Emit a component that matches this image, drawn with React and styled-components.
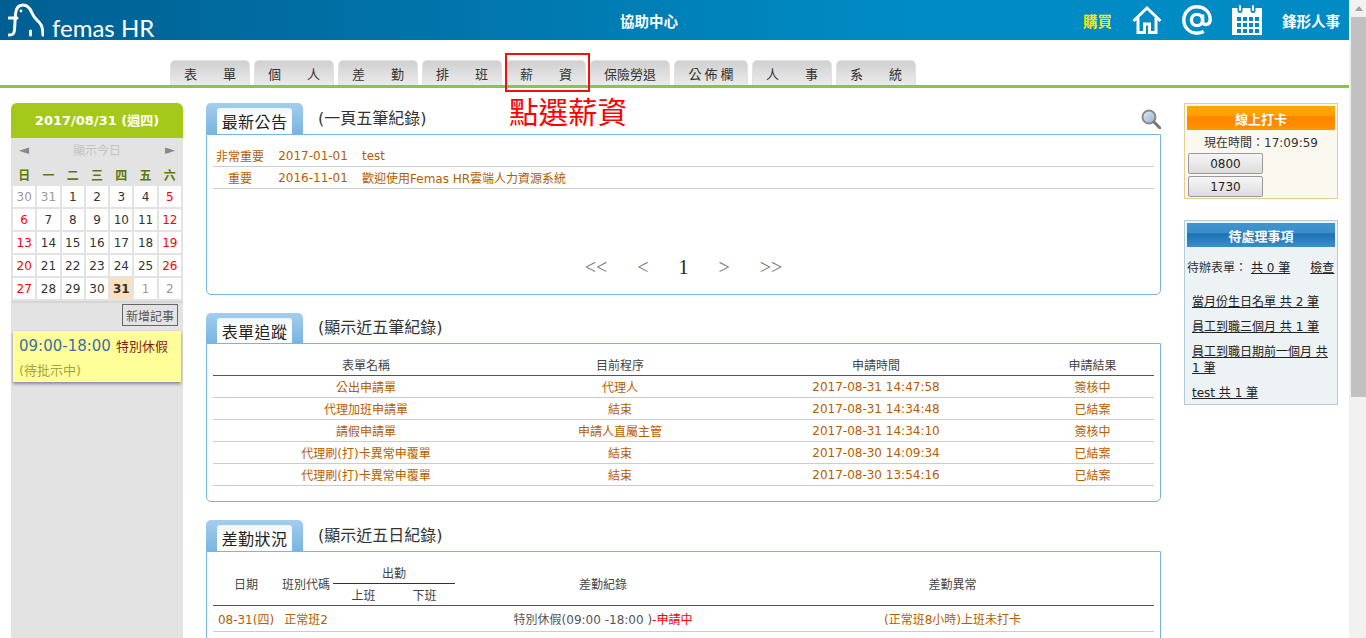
import React from 'react';
import styled, { createGlobalStyle } from 'styled-components';

const GlobalStyle = createGlobalStyle`
    html, body {
        margin: 0;
        height: 100%;
        overflow: hidden;
        background: #fff;
        font-family: "DejaVu Sans", "Noto Sans CJK TC", sans-serif;
        font-size: 12px;
        color: #444;
    }
`;

const Shell = styled.div`
    display: flex;
    height: 100vh;
    overflow: hidden;
`;

const Page = styled.div`
    flex: 1;
    min-width: 0;
    display: flex;
    flex-direction: column;
`;

const Scrollbar = styled.div`
    width: 17px;
    flex-shrink: 0;
    background: #f1f1f1;
    display: flex;
    flex-direction: column;
    align-items: flex-end;
`;

const ScrollArrow = styled.div`
    width: 15px;
    height: 17px;
    display: flex;
    align-items: center;
    justify-content: center;
    &::before {
        content: '';
        border-left: 4px solid transparent;
        border-right: 4px solid transparent;
        border-bottom: 5px solid #a3a3a3;
    }
`;

const ScrollThumb = styled.div`
    width: 15px;
    height: 380px;
    background: #c1c1c1;
`;

const Header = styled.header`
    height: 40px;
    flex-shrink: 0;
    display: flex;
    align-items: center;
    padding: 0 9px 0 8px;
    background: linear-gradient(90deg, #005f92 0%, #0079b0 40%, #008ac3 65%, #008bc4 100%);
    color: #fff;
`;

const Logo = styled.div`
    width: 612px;
    height: 40px;
    display: flex;
    align-items: flex-end;
    gap: 8px;
`;

const LogoMark = styled.svg`
    width: 36px;
    height: 34px;
    margin-bottom: 3px;
    flex-shrink: 0;
`;

const LogoText = styled.span`
    font-family: Lato, "Open Sans", sans-serif;
    font-weight: 400;
    font-size: 24px;
    line-height: 24px;
    white-space: nowrap;
`;

const HeaderLink = styled.span`
    font-family: "Noto Sans CJK TC", sans-serif;
    font-size: 14.5px;
    font-weight: 700;
    color: ${(p) => p.$color || '#fff'};
`;

const HeaderRight = styled.div`
    margin-left: auto;
    display: flex;
    align-items: center;
    gap: 20px;
`;

const HeaderIcon = styled.svg`
    width: 30px;
    height: 30px;
    display: block;
`;

const Nav = styled.nav`
    position: relative;
    height: 45px;
    flex-shrink: 0;
    display: flex;
    align-items: flex-end;
    gap: 4px;
    padding-left: 170px;
    border-bottom: 3px solid #8cc444;
`;

const Tab = styled.div`
    width: ${(p) => (p.$narrow ? 74 : 80)}px;
    height: 25px;
    box-sizing: border-box;
    display: flex;
    align-items: center;
    justify-content: center;
    font-family: "Noto Sans CJK TC", sans-serif;
    font-size: 13px;
    color: #333;
    white-space: pre;
    background: linear-gradient(#d0d0d0, #ebebeb);
    border: 1px solid #e2e2e2;
    border-bottom: 0;
    border-radius: 5px 5px 0 0;
`;

const CalloutBox = styled.div`
    position: absolute;
    left: 505px;
    top: 13px;
    width: 85px;
    height: 39px;
    box-sizing: border-box;
    border: 2px solid #f01010;
`;

const CalloutText = styled.div`
    position: absolute;
    left: 509px;
    top: 50px;
    font-family: "Noto Sans CJK TC", serif;
    font-size: 29.5px;
    line-height: 40px;
    font-weight: 400;
    color: #f00;
    white-space: nowrap;
    z-index: 1;
`;

const Content = styled.div`
    flex: 1;
    min-height: 0;
    overflow: hidden;
    display: flex;
    gap: 23px;
    padding: 15px 11px 0;
`;

const LeftColumn = styled.aside`
    width: 172px;
    flex-shrink: 0;
    background: #e3e3e3;
    border-radius: 6px 6px 0 0;
`;

const DateBar = styled.div`
    height: 35px;
    padding-bottom: 2px;
    box-sizing: border-box;
    display: flex;
    align-items: center;
    justify-content: center;
    background: #a5c91a;
    border-radius: 6px 6px 0 0;
    color: #fff;
    font-weight: 700;
    font-size: 13px;
`;

const TodayRow = styled.div`
    height: 22px;
    display: flex;
    align-items: center;
    justify-content: space-between;
    padding: 0 8px;
    color: #c4c4c4;
    margin-bottom: 2px;
`;

const TodayArrow = styled.span`
    color: #888;
    font-size: 13px;
`;

const Calendar = styled.table`
    border-collapse: separate;
    border-spacing: 2px;
    table-layout: fixed;
    width: 172px;
    border-bottom: 2px solid #d6d6d6;
    padding-bottom: 0;
`;

const WeekHead = styled.th`
    height: 20px;
    padding: 0;
    color: #5e7a05;
    font-size: 12px;
    font-weight: 700;
`;

const DayCell = styled.td`
    height: 21px;
    padding: 0;
    text-align: center;
    background: ${(p) => (p.$today ? '#fde0bd' : '#fff')};
    color: ${(p) => (p.$muted ? '#999' : p.$holiday ? '#f00' : '#333')};
    font-weight: ${(p) => (p.$today ? 700 : 400)};
`;

const NoteAction = styled.div`
    display: flex;
    justify-content: flex-end;
    padding: 1px 5px 5px 0;
`;

const NoteButton = styled.div`
    width: 56px;
    height: 22px;
    box-sizing: border-box;
    display: flex;
    align-items: center;
    justify-content: center;
    border: 1px solid #666;
    color: #555;
    font-size: 12px;
`;

const Note = styled.div`
    margin: 0 2px;
    height: 51px;
    box-sizing: border-box;
    padding: 5px 6px 0;
    background: #ffff99;
    box-shadow: 0 2px 3px rgba(80, 70, 110, 0.6);
`;

const NoteTime = styled.span`
    font-size: 15px;
    color: #39709f;
`;

const NoteType = styled.span`
    margin-left: 5px;
    font-size: 13px;
    color: #8b1a1a;
`;

const NoteStatus = styled.div`
    margin-top: 5px;
    font-size: 13px;
    color: #a3a33a;
`;

const Main = styled.main`
    width: 955px;
    flex-shrink: 0;
    display: flex;
    flex-direction: column;
    gap: 18px;
`;

const Panel = styled.section`
    flex-shrink: 0;
`;

const PanelHead = styled.div`
    height: ${(p) => p.$height || 31}px;
    display: flex;
    align-items: flex-end;
`;

const PanelTab = styled.div`
    width: 97px;
    height: 100%;
    box-sizing: border-box;
    padding: 5px 11px 0;
    background: linear-gradient(#a4cdec, #78b5e2);
    border-radius: 5px 5px 0 0;
`;

const PanelTabLabel = styled.div`
    height: 100%;
    display: flex;
    align-items: center;
    justify-content: center;
    background: linear-gradient(#eef5fb, #fff 40%);
    border-radius: 3px 3px 0 0;
    font-family: "Noto Sans CJK TC", sans-serif;
    font-size: 16px;
    letter-spacing: 0.4px;
    color: #222;
    white-space: nowrap;
`;

const PanelCaption = styled.div`
    margin: 0 0 4px 15px;
    align-self: center;
    font-size: 16px;
    color: #333;
    white-space: nowrap;
`;

const SearchIcon = styled.svg`
    width: 20px;
    height: 20px;
    margin-left: auto;
    align-self: flex-start;
    margin-top: 6px;
`;

const PanelBody = styled.div`
    height: ${(p) => p.$height}px;
    box-sizing: border-box;
    display: flex;
    flex-direction: column;
    padding: 10px 6px 0;
    border: 1px solid #78b5e2;
    border-radius: 0 0 5px 5px;
    background: #fff;
`;

const DataTable = styled.table`
    width: 100%;
    table-layout: fixed;
    border-collapse: collapse;
`;

const Col = styled.col`
    width: ${(p) => p.$width}px;
`;

const HeadCell = styled.th`
    height: 21px;
    padding: 0;
    font-weight: 400;
    color: #444;
    text-align: center;
    border-bottom: 1px solid ${(p) => (p.$nested ? '#333' : '#555')};
`;

const BodyCell = styled.td`
    height: ${(p) => p.$height || 21}px;
    padding: 0;
    padding-right: ${(p) => p.$inset || 0}px;
    text-align: ${(p) => p.$align || 'center'};
    color: ${(p) => p.$color || '#b85c00'};
    border-bottom: 1px solid #ccc;
    white-space: nowrap;
`;

const Alert = styled.span`
    color: #f00;
`;

const Pager = styled.div`
    margin-top: auto;
    height: 38px;
    display: flex;
    justify-content: center;
    align-items: flex-start;
    gap: 30px;
    font-family: "Liberation Serif", serif;
    font-size: 20px;
    color: #777;
`;

const PagerCurrent = styled.span`
    color: #222;
`;

const RightColumn = styled.aside`
    width: 154px;
    flex-shrink: 0;
    margin-left: 0;
    display: flex;
    flex-direction: column;
    gap: 21px;
`;

const SideBox = styled.div`
    box-sizing: border-box;
    height: ${(p) => p.$height}px;
    padding: 2px;
    background: ${(p) => p.$bg};
    border: 1px solid ${(p) => p.$line};
`;

const SideTitle = styled.div`
    height: 24px;
    display: flex;
    align-items: center;
    justify-content: center;
    color: #fff;
    font-family: "Noto Sans CJK TC", sans-serif;
    font-weight: 700;
    font-size: 13px;
    background: ${(p) => p.$gradient};
`;

const ClockLine = styled.div`
    height: 22px;
    padding-bottom: 1px;
    display: flex;
    align-items: center;
    justify-content: center;
    color: #333;
`;

const PunchButton = styled.div`
    width: 75px;
    height: 21px;
    box-sizing: border-box;
    margin: 0 0 2px 1px;
    display: flex;
    align-items: center;
    justify-content: center;
    color: #222;
    background: linear-gradient(#f6f6f6, #dcdcdc);
    border: 1px solid #999;
    border-radius: 2px;
`;

const PendingRow = styled.div`
    display: flex;
    justify-content: space-between;
    margin: 13px 2px 18px 0;
    line-height: 16px;
    color: #333;
    white-space: nowrap;
`;

const PendingLink = styled.span`
    text-decoration: underline;
    color: #222;
`;

const PendingCount = styled(PendingLink)`
    margin-left: 4px;
    margin-right: 20px;
`;

const TodoLink = styled.div`
    margin: 0 3px 9px 5px;
    line-height: 16px;
    text-decoration: underline;
    color: #222;
`;

const weekDays = ['日', '一', '二', '三', '四', '五', '六'];

const weeks = [
    [[30, 'm'], [31, 'm'], 1, 2, 3, 4, 5],
    [6, 7, 8, 9, 10, 11, 12],
    [13, 14, 15, 16, 17, 18, 19],
    [20, 21, 22, 23, 24, 25, 26],
    [27, 28, 29, 30, [31, 't'], [1, 'm'], [2, 'm']],
];

const tabs = [
    { label: '表　　單' },
    { label: '個　　人' },
    { label: '差　　勤' },
    { label: '排　　班' },
    { label: '薪　　資' },
    { label: '保險勞退' },
    { label: '公 佈 欄', narrow: true },
    { label: '人　　事' },
    { label: '系　　統' },
];

const tracking = [
    ['公出申請單', '代理人', '2017-08-31 14:47:58', '簽核中'],
    ['代理加班申請單', '結束', '2017-08-31 14:34:48', '已結案'],
    ['請假申請單', '申請人直屬主管', '2017-08-31 14:34:10', '簽核中'],
    ['代理刷(打)卡異常申覆單', '結束', '2017-08-30 14:09:34', '已結案'],
    ['代理刷(打)卡異常申覆單', '結束', '2017-08-30 13:54:16', '已結案'],
];

function HomeIcon() {
    return (
        <HeaderIcon viewBox="0 0 30 30" fill="none" stroke="#fff" strokeWidth="3">
            <path d="M1.5 16 L15 3 L28.5 16" />
            <path d="M6 13 V27.5 H12.5 V19 H17.5 V27.5 H24 V13" />
        </HeaderIcon>
    );
}

function AtIcon() {
    return (
        <HeaderIcon viewBox="0 0 30 30" fill="none" stroke="#fff" strokeWidth="3.4">
            <circle cx="15" cy="15" r="5.6" />
            <path d="M20.6 9.5 V16.5 C20.6 21 28.2 20.5 28.2 14.5 C28.2 6.5 22 1.8 15 1.8 C7.5 1.8 1.8 7.8 1.8 15 C1.8 22.5 7.5 28.2 15 28.2 C17.5 28.2 19.8 27.7 21.8 26.6" />
        </HeaderIcon>
    );
}

function CalendarIcon() {
    const cells = [];
    [12, 18, 24].forEach((y) => {
        [5, 11, 17, 23].forEach((x) => {
            cells.push(<rect key={`${x}-${y}`} x={x} y={y} width="4" height="4" fill="#0089c2" />);
        });
    });
    return (
        <HeaderIcon viewBox="0 0 30 30">
            <rect x="0" y="3" width="30" height="27" fill="#fff" />
            <rect x="5.5" y="0" width="5" height="8" rx="2.5" fill="#0089c2" />
            <rect x="18.5" y="0" width="5" height="8" rx="2.5" fill="#0089c2" />
            <rect x="7" y="0" width="2" height="6" rx="1" fill="#fff" />
            <rect x="20" y="0" width="2" height="6" rx="1" fill="#fff" />
            {cells}
        </HeaderIcon>
    );
}

function App() {
    return (
        <Shell>
            <GlobalStyle />
            <Page>
                <Header>
                    <Logo>
                        <LogoMark viewBox="0 0 36 34" fill="none" stroke="#fff" strokeWidth="3" strokeLinecap="round">
                            <path d="M1 32 C5 32 6 31 6.5 27 L7.5 11 C8 5 11 2 15 2 C20 2 22 5 24 10 C26 15 29 17 31 19 C34 22 35 26 35 32" />
                            <path d="M1 15 H9" />
                            <path d="M22.5 28 V32" />
                            <circle cx="13" cy="8" r="0.6" strokeWidth="1.6" />
                        </LogoMark>
                        <LogoText>femas HR</LogoText>
                    </Logo>
                    <HeaderLink>協助中心</HeaderLink>
                    <HeaderRight>
                        <HeaderLink $color="#ffe600">購買</HeaderLink>
                        <HomeIcon />
                        <AtIcon />
                        <CalendarIcon />
                        <HeaderLink>鋒形人事</HeaderLink>
                    </HeaderRight>
                </Header>

                <Nav>
                    {tabs.map((tab) => (
                        <Tab key={tab.label} $narrow={tab.narrow}>{tab.label}</Tab>
                    ))}
                    <CalloutBox />
                    <CalloutText>點選薪資</CalloutText>
                </Nav>

                <Content>
                    <LeftColumn>
                        <DateBar>2017/08/31 (週四)</DateBar>
                        <TodayRow>
                            <TodayArrow>◄</TodayArrow>
                            顯示今日
                            <TodayArrow>►</TodayArrow>
                        </TodayRow>
                        <Calendar>
                            <thead>
                                <tr>
                                    {weekDays.map((day) => <WeekHead key={day}>{day}</WeekHead>)}
                                </tr>
                            </thead>
                            <tbody>
                                {weeks.map((week, row) => (
                                    <tr key={row}>
                                        {week.map((item, index) => {
                                            const [day, kind] = Array.isArray(item) ? item : [item];
                                            return (
                                                <DayCell
                                                    key={index}
                                                    $muted={kind === 'm'}
                                                    $today={kind === 't'}
                                                    $holiday={index === 0 || index === 6}
                                                >
                                                    {day}
                                                </DayCell>
                                            );
                                        })}
                                    </tr>
                                ))}
                            </tbody>
                        </Calendar>
                        <NoteAction>
                            <NoteButton>新增記事</NoteButton>
                        </NoteAction>
                        <Note>
                            <NoteTime>09:00-18:00</NoteTime>
                            <NoteType>特別休假</NoteType>
                            <NoteStatus>(待批示中)</NoteStatus>
                        </Note>
                    </LeftColumn>

                    <Main>
                        <Panel>
                            <PanelHead>
                                <PanelTab><PanelTabLabel>最新公告</PanelTabLabel></PanelTab>
                                <PanelCaption>(一頁五筆紀錄)</PanelCaption>
                                <SearchIcon viewBox="0 0 20 20">
                                    <defs>
                                        <linearGradient id="lens" x1="0" y1="0" x2="1" y2="1">
                                            <stop offset="0" stopColor="#e6eef8" />
                                            <stop offset="1" stopColor="#8fadd0" />
                                        </linearGradient>
                                    </defs>
                                    <circle cx="8" cy="8" r="6.5" fill="url(#lens)" stroke="#8a8a8a" strokeWidth="2" />
                                    <path d="M13 13 L19 19" stroke="#777" strokeWidth="3" strokeLinecap="round" />
                                </SearchIcon>
                            </PanelHead>
                            <PanelBody $height={161}>
                                <DataTable>
                                    <colgroup>
                                        <Col $width={54} />
                                        <Col $width={95} />
                                        <Col />
                                    </colgroup>
                                    <tbody>
                                        <tr>
                                            <BodyCell>非常重要</BodyCell>
                                            <BodyCell $inset={3}>2017-01-01</BodyCell>
                                            <BodyCell $align="left">test</BodyCell>
                                        </tr>
                                        <tr>
                                            <BodyCell>重要</BodyCell>
                                            <BodyCell $inset={3}>2016-11-01</BodyCell>
                                            <BodyCell $align="left">歡迎使用Femas HR雲端人力資源系統</BodyCell>
                                        </tr>
                                    </tbody>
                                </DataTable>
                                <Pager>
                                    <span>&lt;&lt;</span>
                                    <span>&lt;</span>
                                    <PagerCurrent>1</PagerCurrent>
                                    <span>&gt;</span>
                                    <span>&gt;&gt;</span>
                                </Pager>
                            </PanelBody>
                        </Panel>

                        <Panel>
                            <PanelHead $height={30}>
                                <PanelTab><PanelTabLabel>表單追蹤</PanelTabLabel></PanelTab>
                                <PanelCaption>(顯示近五筆紀錄)</PanelCaption>
                            </PanelHead>
                            <PanelBody $height={159}>
                                <DataTable>
                                    <colgroup>
                                        <Col $width={306} />
                                        <Col $width={202} />
                                        <Col $width={310} />
                                        <Col />
                                    </colgroup>
                                    <thead>
                                        <tr>
                                            <HeadCell>表單名稱</HeadCell>
                                            <HeadCell>目前程序</HeadCell>
                                            <HeadCell>申請時間</HeadCell>
                                            <HeadCell>申請結果</HeadCell>
                                        </tr>
                                    </thead>
                                    <tbody>
                                        {tracking.map((row, index) => (
                                            <tr key={index}>
                                                <BodyCell>{row[0]}</BodyCell>
                                                <BodyCell>{row[1]}</BodyCell>
                                                <BodyCell>{row[2]}</BodyCell>
                                                <BodyCell>{row[3]}</BodyCell>
                                            </tr>
                                        ))}
                                    </tbody>
                                </DataTable>
                            </PanelBody>
                        </Panel>

                        <Panel>
                            <PanelHead>
                                <PanelTab><PanelTabLabel>差勤狀況</PanelTabLabel></PanelTab>
                                <PanelCaption>(顯示近五日紀錄)</PanelCaption>
                            </PanelHead>
                            <PanelBody $height={161}>
                                <DataTable>
                                    <colgroup>
                                        <Col $width={66} />
                                        <Col $width={54} />
                                        <Col $width={61} />
                                        <Col $width={61} />
                                        <Col $width={296} />
                                        <Col />
                                    </colgroup>
                                    <thead>
                                        <tr>
                                            <HeadCell rowSpan={2}>日期</HeadCell>
                                            <HeadCell rowSpan={2}>班別代碼</HeadCell>
                                            <HeadCell colSpan={2} $nested>出勤</HeadCell>
                                            <HeadCell rowSpan={2}>差勤紀錄</HeadCell>
                                            <HeadCell rowSpan={2}>差勤異常</HeadCell>
                                        </tr>
                                        <tr>
                                            <HeadCell>上班</HeadCell>
                                            <HeadCell>下班</HeadCell>
                                        </tr>
                                    </thead>
                                    <tbody>
                                        <tr>
                                            <BodyCell $height={25}>08-31(四)</BodyCell>
                                            <BodyCell $height={25}>正常班2</BodyCell>
                                            <BodyCell $height={25} />
                                            <BodyCell $height={25} />
                                            <BodyCell $height={25} $color="#555">特別休假(09:00 -18:00 )<Alert>-申請中</Alert></BodyCell>
                                            <BodyCell $height={25}>(正常班8小時)上班未打卡</BodyCell>
                                        </tr>
                                    </tbody>
                                </DataTable>
                            </PanelBody>
                        </Panel>
                    </Main>

                    <RightColumn>
                        <SideBox $height={96} $bg="#fbf8f0" $line="#e8cc90">
                            <SideTitle $gradient="linear-gradient(#ffa800 0%, #ffa000 40%, #ff8400 45%, #ff9400 100%)">線上打卡</SideTitle>
                            <ClockLine>現在時間：17:09:59</ClockLine>
                            <PunchButton>0800</PunchButton>
                            <PunchButton>1730</PunchButton>
                        </SideBox>
                        <SideBox $height={185} $bg="#edf2f5" $line="#b0ccd8">
                            <SideTitle $gradient="linear-gradient(#3f95d0 0%, #3a8ecb 40%, #1f72b4 45%, #3a8ecb 100%)">待處理事項</SideTitle>
                            <PendingRow>
                                <span>待辦表單：<PendingCount>共 0 筆</PendingCount></span>
                                <PendingLink>檢查</PendingLink>
                            </PendingRow>
                            <TodoLink>當月份生日名單 共 2 筆</TodoLink>
                            <TodoLink>員工到職三個月 共 1 筆</TodoLink>
                            <TodoLink>員工到職日期前一個月 共 1 筆</TodoLink>
                            <TodoLink>test 共 1 筆</TodoLink>
                        </SideBox>
                    </RightColumn>
                </Content>
            </Page>
            <Scrollbar>
                <ScrollArrow />
                <ScrollThumb />
            </Scrollbar>
        </Shell>
    );
}

export default App;
